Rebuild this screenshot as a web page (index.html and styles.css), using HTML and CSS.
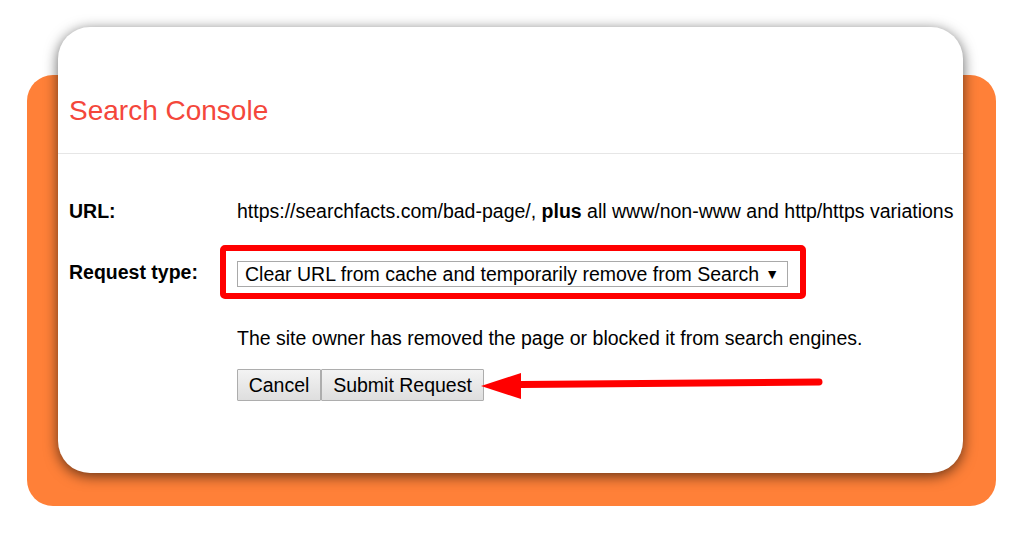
FILE: index.html
```html
<!DOCTYPE html>
<html>
<head>
<meta charset="utf-8">
<link rel="stylesheet" href="styles.css">
</head>
<body>
<div class="orange">
  <div class="card">
    <div class="header"><h1 class="title">Search Console</h1></div>
    <div class="body">
      <div class="row url-row">
        <div class="label">URL:</div>
        <div class="value">https://searchfacts.com/bad-page/, <b>plus</b> all www/non-www and http/https variations</div>
      </div>
      <div class="row type-row">
        <div class="label">Request type:</div>
        <div class="highlight">
          <div class="select"><span>Clear URL from cache and temporarily remove from Search</span><span class="caret">▼</span></div>
        </div>
      </div>
      <div class="row">
        <div class="label"></div>
        <div class="value para">The site owner has removed the page or blocked it from search engines.</div>
      </div>
      <div class="row btn-row">
        <div class="label"></div>
        <div class="buttons">
          <button class="btn cancel">Cancel</button><button class="btn submit">Submit Request</button>
          <svg class="arrow" width="350" height="40" viewBox="0 0 350 40">
            <path d="M40 18.5 L338 16" stroke="#ff0000" stroke-width="7" stroke-linecap="round" fill="none"/>
            <polygon points="0,20 40,7 40,33" fill="#ff0000"/>
          </svg>
        </div>
      </div>
    </div>
  </div>
</div>
</body>
</html>
```

FILE: styles.css
```css
html, body {
  margin: 0;
  padding: 0;
  background: #ffffff;
}
body {
  width: 1024px;
  height: 536px;
  overflow: hidden;
  font-family: "Liberation Sans", Arial, sans-serif;
  color: #000;
}
.orange {
  margin: 75px 0 0 27px;
  width: 969px;
  height: 431px;
  background: #ff8038;
  border-radius: 26px;
  display: flow-root;
}
.card {
  margin: -48px 0 0 31px;
  width: 905px;
  height: 446px;
  background: #fff;
  border-radius: 32px;
  box-shadow: 0 3px 14px rgba(0, 0, 0, 0.62);
  position: relative;
}
.header {
  height: 127px;
  border-bottom: 1px solid #e6e6e6;
  box-sizing: border-box;
  padding: 69px 0 0 11px;
}
.title {
  margin: 0;
  font-weight: normal;
  font-size: 28px;
  line-height: 30px;
  color: #f4473b;
}
.body {
  padding: 45px 0 0 11px;
}
.row {
  display: flex;
  align-items: center;
}
.label {
  width: 168px;
  flex: none;
  font-weight: bold;
  font-size: 19.5px;
  line-height: 24px;
}
.value {
  font-size: 19.5px;
  line-height: 24px;
  white-space: nowrap;
}
.type-row {
  margin-top: 22px;
}
.highlight {
  margin-left: -17px;
  border: 6px solid #ff0000;
  border-radius: 5px;
  padding: 10px 12px 6px 11px;
}
.select {
  width: 551px;
  height: 26px;
  box-sizing: border-box;
  border: 1px solid #a9a9a9;
  display: flex;
  align-items: center;
  justify-content: space-between;
  padding: 0 8px 0 7px;
  font-size: 19.5px;
  line-height: 24px;
  white-space: nowrap;
}
.caret {
  font-size: 14px;
}
.para {
  margin-top: 27px;
}
.btn-row {
  margin-top: 19px;
}
.buttons {
  display: flex;
  position: relative;
}
.btn {
  height: 32px;
  border: 1px solid #adadad;
  background: linear-gradient(#f3f3f3, #dedede);
  font-family: "Liberation Sans", Arial, sans-serif;
  font-size: 19.5px;
  color: #000;
  padding: 0;
  margin: 0;
  border-radius: 1px;
}
.cancel {
  width: 84px;
}
.submit {
  width: 163px;
  margin-left: 0;
}
.arrow {
  position: absolute;
  left: 244px;
  top: -3px;
}
```
